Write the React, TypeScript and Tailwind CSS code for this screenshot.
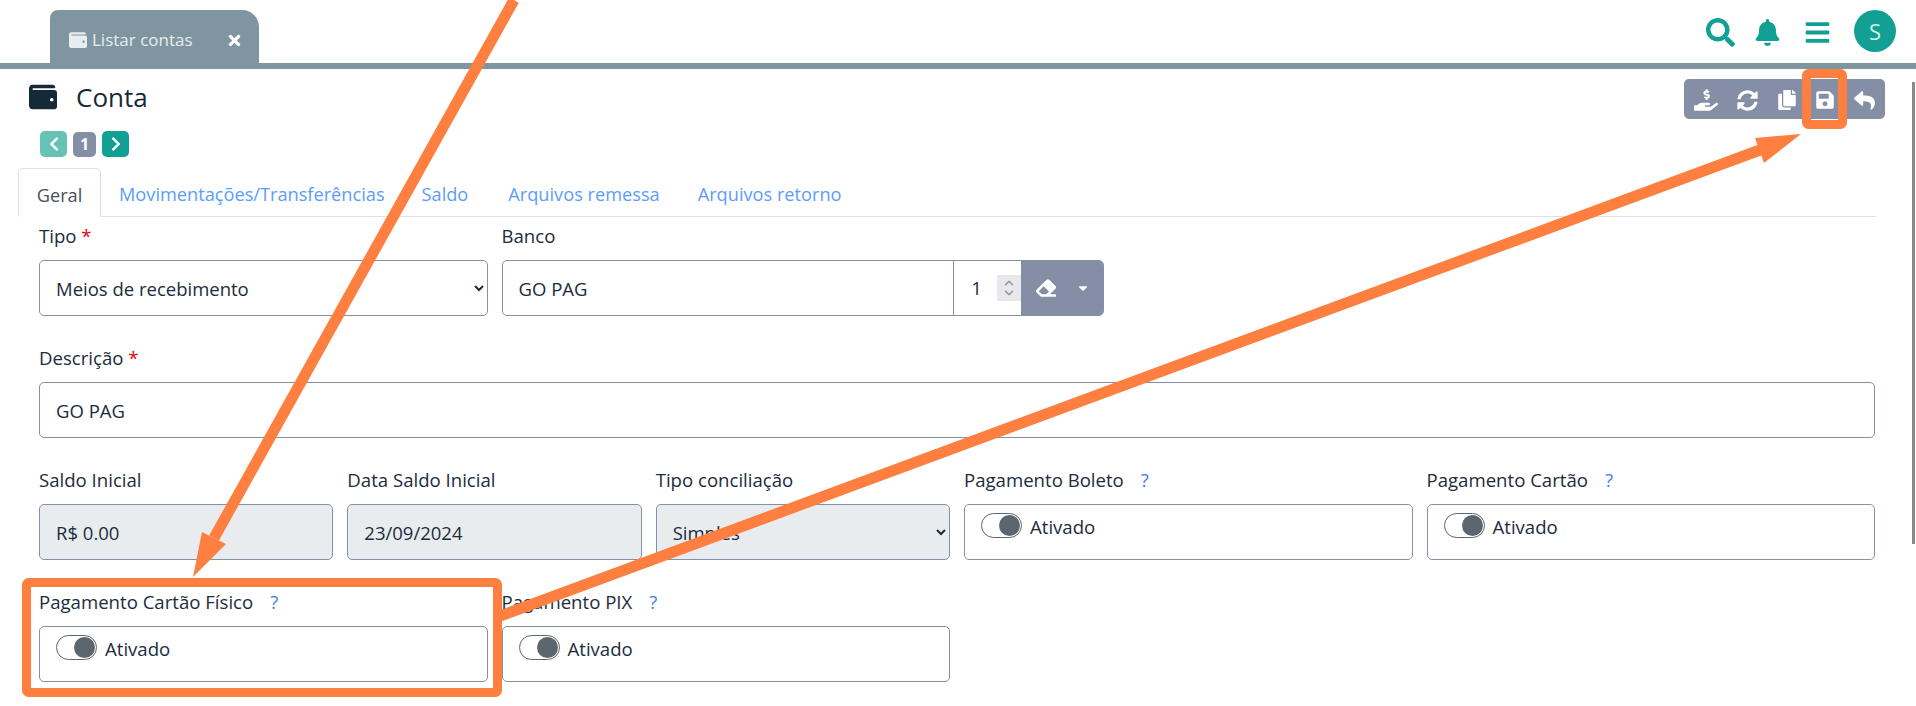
import { FaBars, FaBell, FaCaretDown, FaChevronDown, FaChevronLeft, FaChevronRight, FaChevronUp, FaCopy, FaEraser, FaHandHoldingUsd, FaReply, FaSave, FaSearch, FaSyncAlt, FaTimes, FaWallet } from 'react-icons/fa';

const labelClass = 'block h-[25px] text-[18.6px] leading-[25px] text-[#1b2c3d] whitespace-nowrap';
const boxClass = 'h-[56px] w-full rounded-[5px] border border-[#8390a6] px-4 text-[18.5px] text-[#1b2c3d] outline-none';

const Field = ({ label, required, className, children }: { label: string; required?: boolean; className: string; children: React.ReactNode }) => (
  <div className={className}>
    <label className={`${labelClass} mb-[12px]`}>
      {label}
      {required && <span className="text-red-600"> *</span>}
    </label>
    {children}
  </div>
);

const ToggleField = ({ label, className }: { label: string; className: string }) => (
  <div className={className}>
    <label className={`${labelClass} mb-[12px]`}>
      {label}
      <span className="ml-[17px] text-[#3f7fe0]">?</span>
    </label>
    <div className="flex h-[56px] items-start rounded-[5px] border border-[#8390a6] bg-white pl-4 pt-[8px]">
      <div className="flex h-[25px] w-[41px] items-center justify-end rounded-full border border-[#5c666e] bg-white pr-[1px]">
        <div className="h-[21px] w-[21px] rounded-full bg-[#5c666e]" />
      </div>
      <span className="ml-[8px] mt-[1px] text-[18.6px] leading-[25px] text-[#1b2c3d]">Ativado</span>
    </div>
  </div>
);

export default function App() {
  return (
    <div className="relative h-[706px] w-[1916px] overflow-hidden bg-white font-['Open_Sans',sans-serif] text-[#1b2c3d]">
      <header className="flex h-[69px] items-start justify-between border-b-[6px] border-[#7f959f]">
        <div className="ml-[50px] mt-[10px] flex h-[53px] w-[209px] items-center rounded-t-[17px] rounded-tl-[8px] bg-[#7f959f] pl-[19px] pt-[6px] text-[#e8edef]">
          <FaWallet className="text-[18px]" />
          <span className="ml-[5px] text-[17px]">Listar contas</span>
          <FaTimes className="ml-[33px] mt-[2px] text-[17px] text-white" />
        </div>
        <div className="mr-[20px] mt-[10px] flex items-center text-[#12a094]">
          <FaSearch className="mt-[2px] text-[29px]" />
          <FaBell className="ml-[19px] mt-[2px] text-[27px]" />
          <FaBars className="ml-[23px] mt-[2px] text-[27px]" />
          <div className="ml-[23px] flex h-[42px] w-[42px] items-center justify-center rounded-full bg-[#12a094] text-[22px] text-[#d4f0ec]">S</div>
        </div>
      </header>

      <main className="relative">
        <div className="flex items-start justify-between pl-[29px] pr-[31px]">
          <div className="flex h-[56px] items-center">
            <FaWallet className="text-[28px] text-[#152a38]" />
            <h1 className="ml-[19px] text-[26px] text-[#152a38]">Conta</h1>
          </div>
          <div className="mt-[10px] flex h-[40px] w-[201px] items-center justify-between rounded-[5px] bg-[#848fa6] pl-[10px] pr-[10px] pt-[2px] text-white">
            <FaHandHoldingUsd className="text-[24px]" />
            <FaSyncAlt className="text-[21px]" />
            <FaCopy className="text-[20px]" />
            <FaSave className="text-[20px]" />
            <FaReply className="text-[21px]" />
          </div>
        </div>

        <div className="ml-[40px] mt-[6px] flex items-center">
          <div className="flex h-[26px] w-[27px] items-center justify-center rounded-[5px] bg-[#66c2b6] text-white"><FaChevronLeft className="text-[16px]" /></div>
          <div className="ml-[6px] flex h-[25px] w-[23px] items-center justify-center rounded-[5px] bg-[#848fa6] text-[16px] font-bold text-white">1</div>
          <div className="ml-[6px] flex h-[26px] w-[27px] items-center justify-center rounded-[5px] bg-[#12a094] text-white"><FaChevronRight className="text-[16px]" /></div>
        </div>

        <nav className="ml-[18px] mr-[40px] mt-[11px] flex h-[49px] border-b border-[#dee2e6] pt-[2px] text-[18.2px] leading-[49px] text-[#5c9cff]">
          <div className="-mt-[2px] h-[49px] w-[83px] rounded-t-[5px] border border-b-white border-[#dee2e6] bg-white pt-[2px] text-center text-[#495057]">Geral</div>
          <span className="ml-[18px]">Movimentações/Transferências</span>
          <span className="ml-[37px]">Saldo</span>
          <span className="ml-[40px]">Arquivos remessa</span>
          <span className="ml-[38px]">Arquivos retorno</span>
        </nav>

        <div className="ml-[39px] mr-[41px] mt-[6px] grid grid-cols-12 gap-x-[14px] gap-y-[29px]">
          <Field label="Tipo" required className="col-span-3">
            <select className={`${boxClass} bg-white pl-[12px]`} defaultValue="Meios de recebimento">
              <option>Meios de recebimento</option>
            </select>
          </Field>
          <Field label="Banco" className="col-span-4">
            <div className="flex h-[56px] overflow-hidden rounded-[5px] border border-[#8390a6]">
              <input readOnly value="GO PAG" className="min-w-0 flex-1 px-4 pt-[2px] text-[18.5px] outline-none" />
              <div className="flex w-[68px] items-center border-l border-[#8390a6] pl-[17px] text-[18.5px]">
                <span>1</span>
                <div className="ml-auto flex h-[26px] w-[24px] flex-col items-center justify-center bg-[#e8e8ec] text-[10px] text-[#9a9aa5]">
                  <FaChevronUp />
                  <FaChevronDown />
                </div>
              </div>
              <div className="flex w-[82px] items-center bg-[#848fa6] pl-[15px] text-white">
                <FaEraser className="text-[20px]" />
                <FaCaretDown className="ml-[20px] text-[14px]" />
              </div>
            </div>
          </Field>
          <div className="col-span-5" />

          <Field label="Descrição" required className="col-span-12">
            <input readOnly value="GO PAG" className={`${boxClass} bg-white`} />
          </Field>

          <Field label="Saldo Inicial" className="col-span-2">
            <input readOnly value="R$ 0.00" className={`${boxClass} bg-[#e9ecef]`} />
          </Field>
          <Field label="Data Saldo Inicial" className="col-span-2">
            <input readOnly value="23/09/2024" className={`${boxClass} bg-[#e9ecef]`} />
          </Field>
          <Field label="Tipo conciliação" className="col-span-2">
            <select className={`${boxClass} bg-[#e9ecef] pl-[12px]`} defaultValue="Simples">
              <option>Simples</option>
            </select>
          </Field>
          <ToggleField label="Pagamento Boleto" className="col-span-3" />
          <ToggleField label="Pagamento Cartão" className="col-span-3" />

          <ToggleField label="Pagamento Cartão Físico" className="col-span-3" />
          <ToggleField label="Pagamento PIX" className="col-span-3" />
        </div>
      </main>

      {/* scrollbar */}
      <div className="absolute left-[1912px] top-[82px] h-[462px] w-[3px] bg-[#8a8a8a]" />

      {/* annotations drawn over the page */}
      <svg className="pointer-events-none absolute left-0 top-0" width="1916" height="706" viewBox="0 0 1916 706" fill="none">
        <line x1="514" y1="0" x2="214" y2="538" stroke="#ff7f41" strokeWidth="11" />
        <polygon points="193,577 202,532 226,544" fill="#ff7f41" />
        <line x1="500" y1="616" x2="1760" y2="150" stroke="#ff7f41" strokeWidth="11" />
        <polygon points="1801,134 1755,138 1764,163" fill="#ff7f41" />
        <rect x="26.5" y="582.5" width="471" height="110" rx="2" stroke="#ff7f41" strokeWidth="9" />
        <rect x="1806.5" y="73.5" width="36" height="51" rx="2" stroke="#ff7f41" strokeWidth="9" />
      </svg>
    </div>
  );
}
